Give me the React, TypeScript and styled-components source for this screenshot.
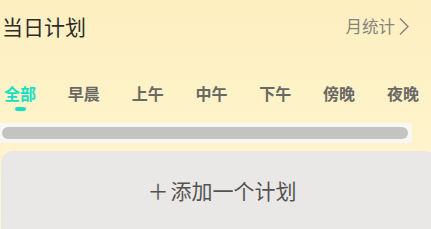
import { FC, useState } from 'react';
import styled, { createGlobalStyle } from 'styled-components';

const GlobalStyle = createGlobalStyle`
  html, body {
    margin: 0;
    padding: 0;
    width: 431px;
    height: 229px;
    overflow: hidden;
  }
  body {
    font-family: "Noto Sans CJK SC", "Noto Sans", sans-serif;
  }
`;

const Page = styled.div`
  width: 431px;
  height: 229px;
  display: flex;
  flex-direction: column;
  background: linear-gradient(180deg, #fdefc0 0%, #fef3cb 60%, #fef5d3 100%);
  overflow: hidden;
`;

const Header = styled.div`
  display: flex;
  align-items: center;
  justify-content: space-between;
  height: 52px;
  padding: 0 21px 0 2px;
`;

const Title = styled.h1`
  margin: 0;
  font-size: 21px;
  font-weight: 400;
  color: #2c2c2c;
`;

const MonthLink = styled.a`
  display: flex;
  align-items: center;
  gap: 3px;
  font-size: 16.5px;
  color: #858380;
  cursor: pointer;
`;

const Tabs = styled.div`
  display: flex;
  padding: 31px 0 0 4px;
  gap: 31.8px;
`;

const Tab = styled.div<{ $active?: boolean }>`
  position: relative;
  font-size: 16px;
  font-weight: 700;
  line-height: 20px;
  color: ${p => (p.$active ? '#15e0c4' : '#6a6865')};
  cursor: pointer;

  &::after {
    content: '';
    display: ${p => (p.$active ? 'block' : 'none')};
    position: absolute;
    left: 11px;
    top: 24px;
    width: 11px;
    height: 4px;
    border-radius: 2px;
    background: #15e0c4;
  }
`;

const ScrollTrack = styled.div`
  margin: 20px 19px 0 0;
  height: 20px;
  padding: 4px 4px 4px 2px;
  box-sizing: border-box;
  background: #f8f7f3;
  display: flex;
  align-items: center;
`;

const ScrollThumb = styled.div`
  flex: 1;
  height: 12px;
  border-radius: 6px;
  background: #c3c3c2;
`;

const AddCard = styled.div`
  flex: 1;
  margin: 8px -6px 0 1px;
  border-radius: 12px 12px 0 0;
  background: #e9e8e6;
  display: flex;
  align-items: center;
  justify-content: center;
  padding: 0 0 0 6px;
  font-size: 21px;
  color: #545352;
  cursor: pointer;
`;

const Plus = styled.span`
  margin-right: 2px;
`;

const tabs = ['全部', '早晨', '上午', '中午', '下午', '傍晚', '夜晚'];

const Chevron: FC = () => (
  <svg width="12" height="19" viewBox="0 0 12 19" fill="none">
    <path d="M2 1.5 L10 9.5 L2 17.5" stroke="#858380" strokeWidth="1.4" />
  </svg>
);

const App: FC = () => {
  const [active, setActive] = useState(0);
  return (
    <>
      <GlobalStyle />
      <Page>
        <Header>
          <Title>当日计划</Title>
          <MonthLink>
            月统计
            <Chevron />
          </MonthLink>
        </Header>
        <Tabs>
          {tabs.map((t, i) => (
            <Tab key={t} $active={i === active} onClick={() => setActive(i)}>
              {t}
            </Tab>
          ))}
        </Tabs>
        <ScrollTrack>
          <ScrollThumb />
        </ScrollTrack>
        <AddCard>
          <Plus>＋</Plus>添加一个计划
        </AddCard>
      </Page>
    </>
  );
};

export default App;
